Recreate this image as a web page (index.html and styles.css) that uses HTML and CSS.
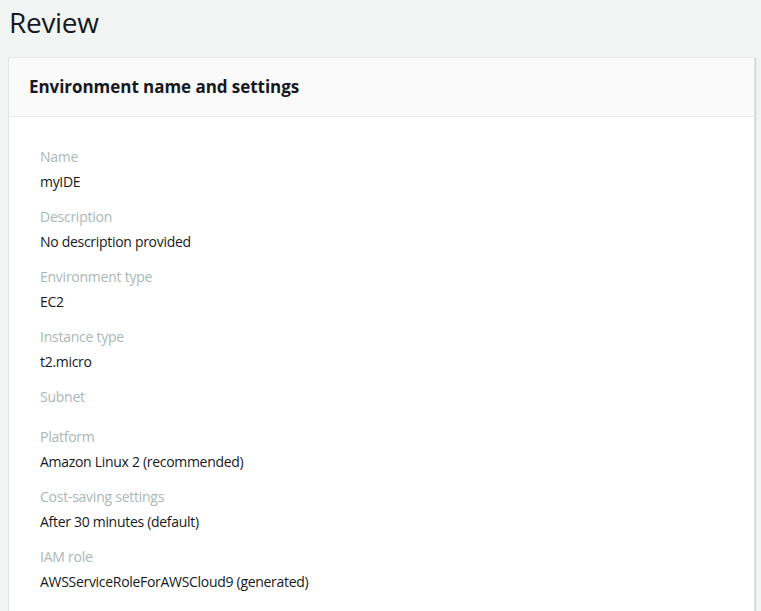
FILE: index.html
```html
<!DOCTYPE html>
<html>
<head>
<meta charset="utf-8">
<link rel="stylesheet" href="styles.css">
</head>
<body>
<div class="page">
  <h1 class="title">Review</h1>
  <section class="card">
    <header class="card-header">
      <h2>Environment name and settings</h2>
    </header>
    <div class="card-body">
      <div class="field"><div class="label">Name</div><div class="value">myIDE</div></div>
      <div class="field"><div class="label">Description</div><div class="value">No description provided</div></div>
      <div class="field"><div class="label">Environment type</div><div class="value">EC2</div></div>
      <div class="field"><div class="label">Instance type</div><div class="value">t2.micro</div></div>
      <div class="field"><div class="label">Subnet</div><div class="value"></div></div>
      <div class="field"><div class="label">Platform</div><div class="value">Amazon Linux 2 (recommended)</div></div>
      <div class="field"><div class="label">Cost-saving settings</div><div class="value">After 30 minutes (default)</div></div>
      <div class="field"><div class="label">IAM role</div><div class="value">AWSServiceRoleForAWSCloud9 (generated)</div></div>
    </div>
  </section>
</div>
</body>
</html>
```
FILE: styles.css
```css
html, body {
  margin: 0;
  padding: 0;
  background: #f2f3f3;
  font-family: "Open Sans", "Liberation Sans", Arial, sans-serif;
  color: #16191f;
  overflow: hidden;
}
.page {
  padding: 4px 6px 0 8px;
}
.title {
  margin: 0 0 17px 1px;
  font-size: 28px;
  line-height: 36px;
  font-weight: 400;
  letter-spacing: -0.3px;
  color: #16191f;
}
.card {
  background: #ffffff;
  border: 1px solid #e1e4e4;
  border-top-color: #e6e8e8;
  box-shadow: 1px 1px 1px rgba(0,0,0,0.12);
}
.card-header {
  background: #fafafa;
  border-bottom: 1px solid #eaeded;
  height: 58px;
  padding: 0 20px;
  display: flex;
  align-items: center;
}
.card-header h2 {
  margin: 0;
  font-size: 17px;
  line-height: 22px;
  font-weight: 700;
  letter-spacing: -0.05px;
  color: #16191f;
}
.card-body {
  padding: 30px 31px 20px;
}
.field {
  display: flex;
  flex-direction: column;
  gap: 5px;
  margin-bottom: 15px;
}
.label {
  font-size: 14px;
  line-height: 20px;
  letter-spacing: -0.25px;
  color: #aab7b8;
}
.value {
  font-size: 14px;
  line-height: 20px;
  letter-spacing: -0.3px;
  color: #16191f;
}
```
